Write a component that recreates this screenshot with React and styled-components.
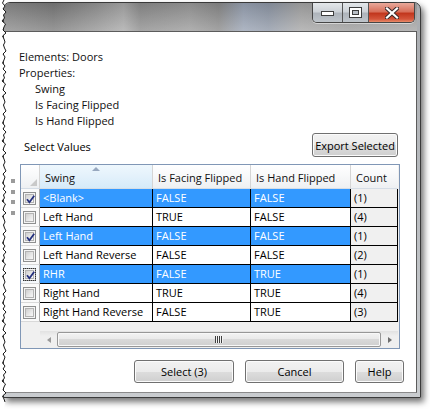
import React from 'react';
import styled, { createGlobalStyle } from 'styled-components';

const GlobalStyle = createGlobalStyle`
  html, body {
    margin: 0;
    background: #fff;
  }
  body {
    font-family: "Open Sans", "Noto Sans", sans-serif;
    font-size: 11px;
    color: #000;
  }
`;

const cols = '19px 113px 98px 100px 47px';

const Page = styled.div`
  position: relative;
  width: 430px;
  height: 409px;
  overflow: hidden;
  box-sizing: border-box;
  padding: 2px 0 0 3px;
`;

const Window = styled.div`
  width: 418px;
  height: 396px;
  box-sizing: border-box;
  border: 1px solid #3a3a3a;
  border-radius: 7px 7px 0 0;
  box-shadow: 3px 4px 6px rgba(0, 0, 0, 0.55);
  background: linear-gradient(180deg, #a9acb0, #c9cccf);
  padding: 0 3px 4px 0;
  display: flex;
  flex-direction: column;
  overflow: hidden;
`;

const TitleBar = styled.div`
  height: 28px;
  flex: none;
  display: flex;
  justify-content: flex-end;
  align-items: flex-start;
  padding-right: 2px;
  background:
    linear-gradient(180deg, rgba(0, 0, 0, 0.1), rgba(255, 255, 255, 0.22)),
    linear-gradient(90deg, #8b8b8b 0%, #7a7a7a 12%, #939393 22%, #a8a8a8 29%, #8c8c8c 33%,
      #9a9a9a 45%, #8a8a8a 52%, #98a2b3 58%, #8e97a6 64%, #a6a6a6 72%, #9b9b9b 84%, #a3a3a3 100%);
`;

const CaptionGroup = styled.div`
  display: flex;
  height: 19px;
  border: 1px solid #464646;
  border-top: none;
  border-radius: 0 0 5px 5px;
  overflow: hidden;
  box-shadow: 0 1px 0 rgba(255, 255, 255, 0.5);
`;

const CaptionButton = styled.div`
  width: ${p => p.$w}px;
  display: flex;
  align-items: center;
  justify-content: center;
  box-sizing: border-box;
  border-left: ${p => (p.$first ? 'none' : '1px solid #555')};
  background: ${p =>
    p.$close
      ? 'linear-gradient(180deg, #e9a99b 0%, #d8715c 45%, #c2371e 55%, #d4553b 85%, #e88d6a 100%)'
      : 'linear-gradient(180deg, #e4e7ea 0%, #cdd2d7 45%, #aeb4bb 55%, #bfc5cb 100%)'};
`;

const Content = styled.div`
  flex: 1;
  background: #fff;
  border-top: 1px solid #5c5c5c;
  border-right: 1px solid #5c5c5c;
  border-bottom: 1px solid #8a8a8a;
  display: flex;
  flex-direction: column;
  min-height: 0;
`;

const Info = styled.div`
  margin: 17px 0 0 15px;
  line-height: 16px;
  color: #101010;
`;

const InfoLine = styled.div`
  padding-left: ${p => (p.$indent ? 16 : 0)}px;
  white-space: nowrap;
`;

const Toolbar = styled.div`
  margin: 4px 18px 0 20px;
  height: 24px;
  display: flex;
  justify-content: space-between;
  align-items: center;
`;

const Label = styled.span`
  padding-top: 3px;
`;

const Button = styled.button`
  width: ${p => p.$w}px;
  height: ${p => p.$h || 23}px;
  box-sizing: border-box;
  padding: 0;
  font-family: inherit;
  font-size: 11px;
  color: #000;
  border: 1px solid #707070;
  border-radius: 3px;
  box-shadow: inset 0 0 0 1px #fbfbfb;
  background: linear-gradient(180deg, #f2f2f2 0%, #ebebeb 50%, #dddddd 50%, #cfcfcf 100%);
`;

const GridSection = styled.div`
  margin-top: 7px;
  display: flex;
`;

const Handles = styled.div`
  width: 16px;
  box-sizing: border-box;
  padding: 15px 0 0 7px;
  display: flex;
  flex-direction: column;
  gap: 6.5px;
`;

const HandleDot = styled.div`
  width: 4px;
  height: 4px;
  background: #9b9b9b;
`;

const Grid = styled.div`
  width: 380px;
  height: 185px;
  box-sizing: border-box;
  border: 1px solid #8097b6;
  background: #f0f0f0;
  display: flex;
  flex-direction: column;
`;

const HeaderRow = styled.div`
  display: grid;
  grid-template-columns: ${cols};
  height: 24px;
  flex: none;
`;

const HeaderCell = styled.div`
  position: relative;
  box-sizing: border-box;
  border-right: 1px solid ${p => (p.$last ? 'transparent' : '#d5d5d5')};
  border-bottom: 1px solid #d5dde6;
  padding: 2px 0 0 ${p => (p.$corner ? 0 : 5)}px;
  display: flex;
  align-items: center;
  white-space: nowrap;
  overflow: hidden;
  color: #111;
  background: ${p =>
    p.$sorted
      ? 'linear-gradient(180deg, #eef7fd 0%, #e3f1fb 50%, #d6ebf9 100%)'
      : 'linear-gradient(180deg, #ffffff 0%, #f7f8f9 50%, #eef0f2 100%)'};
`;

const SortGlyph = styled.svg`
  position: absolute;
  top: 2px;
  left: 50%;
  margin-left: -4px;
`;

const CornerGlyph = styled.svg`
  position: absolute;
  right: 2px;
  bottom: 2px;
`;

const Row = styled.div`
  display: grid;
  grid-template-columns: ${cols};
  height: 19px;
  flex: none;
`;

const RowHeader = styled.div`
  box-sizing: border-box;
  border-right: 1px solid #a9a9a9;
  border-bottom: 1px solid #d9d9d9;
  background: ${p => (p.$focus ? '#f4f8fc' : '#fafafa')};
  display: flex;
  align-items: center;
  padding-left: 2px;
`;

const Cell = styled.div`
  box-sizing: border-box;
  border-right: 1px solid #000;
  border-bottom: 1px solid #000;
  padding-left: 3px;
  line-height: 18px;
  white-space: nowrap;
  overflow: hidden;
  background: ${p => (p.$count ? '#f0f0f0' : p.$selected ? '#3399ff' : '#fff')};
  color: ${p => (p.$selected && !p.$count ? '#fff' : '#000')};
`;

const CheckBox = styled.div`
  width: 13px;
  height: 13px;
  box-sizing: border-box;
  border: 1px solid #8e8f8f;
  padding: 1px;
  background: #f4f4f4;
  outline: ${p => (p.$focus ? '1px dotted #333' : 'none')};
  outline-offset: -1px;
  position: relative;
`;

const CheckInner = styled.div`
  width: 100%;
  height: 100%;
  box-sizing: border-box;
  border: 1px solid #b3b3b3;
  background: linear-gradient(135deg, #cfcfcf 0%, #e9e9e9 60%, #f7f7f7 100%);
`;

const CheckMark = styled.svg`
  position: absolute;
  left: 0;
  top: 0;
`;

const Filler = styled.div`
  flex: 1;
`;

const ScrollBar = styled.div`
  height: 17px;
  flex: none;
  margin: 0 1px 0 19px;
  display: flex;
  background: linear-gradient(180deg, #e2e2e2 0%, #efefef 30%, #efefef 100%);
`;

const ScrollArrow = styled.div`
  width: 17px;
  display: flex;
  align-items: center;
  justify-content: center;
  &::before {
    content: '';
    border-top: 3.5px solid transparent;
    border-bottom: 3.5px solid transparent;
    ${p => (p.$right ? 'border-left: 4px solid #6e6e6e;' : 'border-right: 4px solid #9a9a9a;')}
  }
`;

const Thumb = styled.div`
  flex: 1;
  margin: 1px 0;
  box-sizing: border-box;
  border: 1px solid #979797;
  border-radius: 2px;
  box-shadow: inset 0 0 0 1px #f8f8f8;
  background: linear-gradient(180deg, #f3f3f3 0%, #e9e9e9 50%, #d9d9d9 50%, #cfcfcf 100%);
  display: flex;
  align-items: center;
  justify-content: center;
`;

const Grip = styled.div`
  width: 8px;
  height: 7px;
  background: repeating-linear-gradient(90deg, #3f3f3f 0 1px, #f4f4f4 1px 2px);
`;

const Footer = styled.div`
  margin-top: 11px;
  display: flex;
  justify-content: flex-end;
  gap: 11px;
  padding-right: 12px;
`;

const TornEdge = styled.svg`
  position: absolute;
  left: 0;
  top: 0;
`;

const rows = [
  { swing: '<Blank>', facing: 'FALSE', hand: 'FALSE', count: '(1)', sel: true },
  { swing: 'Left Hand', facing: 'TRUE', hand: 'FALSE', count: '(4)' },
  { swing: 'Left Hand', facing: 'FALSE', hand: 'FALSE', count: '(1)', sel: true },
  { swing: 'Left Hand Reverse', facing: 'FALSE', hand: 'FALSE', count: '(2)' },
  { swing: 'RHR', facing: 'FALSE', hand: 'TRUE', count: '(1)', sel: true, focus: true },
  { swing: 'Right Hand', facing: 'TRUE', hand: 'TRUE', count: '(4)' },
  { swing: 'Right Hand Reverse', facing: 'FALSE', hand: 'TRUE', count: '(3)' },
];

// jagged line for the torn left edge of the screenshot
const jag = [4, 2.5, 5, 3, 6, 3.5, 4.5, 2, 5.5, 4, 3, 6, 2.5, 4, 5, 3.5, 4.5, 6, 3, 5];
const tornPoints = () => {
  const pts = [];
  for (let y = 0, i = 0; y <= 402; y += 3, i++) pts.push(`${jag[i % jag.length]},${y}`);
  return pts;
};

const Check = ({ checked, focus }) => (
  <CheckBox $focus={focus}>
    <CheckInner />
    {checked && (
      <CheckMark width="13" height="13" viewBox="0 0 13 13">
        <path d="M3 6.2 L5.4 9.2 L10.2 2.8" fill="none" stroke="#24307e" strokeWidth="1.8" />
      </CheckMark>
    )}
  </CheckBox>
);

export default function App() {
  const pts = tornPoints();
  return (
    <>
      <GlobalStyle />
      <Page>
        <Window>
          <TitleBar>
            <CaptionGroup>
              <CaptionButton $w={29} $first>
                <svg width="13" height="6" viewBox="0 0 13 6">
                  <rect x="0.5" y="1.5" width="12" height="4" fill="#fff" stroke="#3d3d3d" />
                </svg>
              </CaptionButton>
              <CaptionButton $w={26}>
                <svg width="13" height="11" viewBox="0 0 13 11">
                  <rect x="0.5" y="0.5" width="12" height="10" fill="#fff" stroke="#3d3d3d" />
                  <rect x="3.5" y="3.5" width="6" height="4" fill="#b8bec5" stroke="#3d3d3d" />
                </svg>
              </CaptionButton>
              <CaptionButton $w={46} $close>
                <svg width="14" height="12" viewBox="0 0 14 12">
                  <path d="M2 1.5 L12 10.5 M12 1.5 L2 10.5" stroke="#3a2a2a" strokeWidth="4.2" strokeLinecap="square" />
                  <path d="M2 1.5 L12 10.5 M12 1.5 L2 10.5" stroke="#fff" strokeWidth="2.2" strokeLinecap="square" />
                </svg>
              </CaptionButton>
            </CaptionGroup>
          </TitleBar>
          <Content>
            <Info>
              <InfoLine>Elements: Doors</InfoLine>
              <InfoLine>Properties:</InfoLine>
              <InfoLine $indent>Swing</InfoLine>
              <InfoLine $indent>Is Facing Flipped</InfoLine>
              <InfoLine $indent>Is Hand Flipped</InfoLine>
            </Info>
            <Toolbar>
              <Label>Select Values</Label>
              <Button $w={86} $h={24}>Export Selected</Button>
            </Toolbar>
            <GridSection>
              <Handles>
                <HandleDot />
                <HandleDot />
                <HandleDot />
                <HandleDot />
              </Handles>
              <Grid>
                <HeaderRow>
                  <HeaderCell $corner>
                    <CornerGlyph width="7" height="7" viewBox="0 0 7 7">
                      <path d="M7 0 L7 7 L0 7 Z" fill="#c9c9c9" />
                    </CornerGlyph>
                  </HeaderCell>
                  <HeaderCell $sorted>
                    <SortGlyph width="8" height="4" viewBox="0 0 8 4">
                      <path d="M0 4 L4 0 L8 4 Z" fill="#97a8bf" />
                    </SortGlyph>
                    Swing
                  </HeaderCell>
                  <HeaderCell>Is Facing Flipped</HeaderCell>
                  <HeaderCell>Is Hand Flipped</HeaderCell>
                  <HeaderCell $last>Count</HeaderCell>
                </HeaderRow>
                {rows.map((r, i) => (
                  <Row key={i}>
                    <RowHeader $focus={r.focus}>
                      <Check checked={r.sel} focus={r.focus} />
                    </RowHeader>
                    <Cell $selected={r.sel}>{r.swing}</Cell>
                    <Cell $selected={r.sel}>{r.facing}</Cell>
                    <Cell $selected={r.sel}>{r.hand}</Cell>
                    <Cell $selected={r.sel} $count>{r.count}</Cell>
                  </Row>
                ))}
                <Filler />
                <ScrollBar>
                  <ScrollArrow />
                  <Thumb>
                    <Grip />
                  </Thumb>
                  <ScrollArrow $right />
                </ScrollBar>
              </Grid>
            </GridSection>
            <Footer>
              <Button $w={100}>Select (3)</Button>
              <Button $w={99}>Cancel</Button>
              <Button $w={49}>Help</Button>
            </Footer>
          </Content>
        </Window>
        <TornEdge width="9" height="409" viewBox="0 0 9 409">
          <polygon points={`0,0 ${pts.join(' ')} 4,409 0,409`} fill="#fff" />
          <polyline points={pts.join(' ')} fill="none" stroke="#1c1c1c" strokeWidth="1" />
        </TornEdge>
      </Page>
    </>
  );
}
